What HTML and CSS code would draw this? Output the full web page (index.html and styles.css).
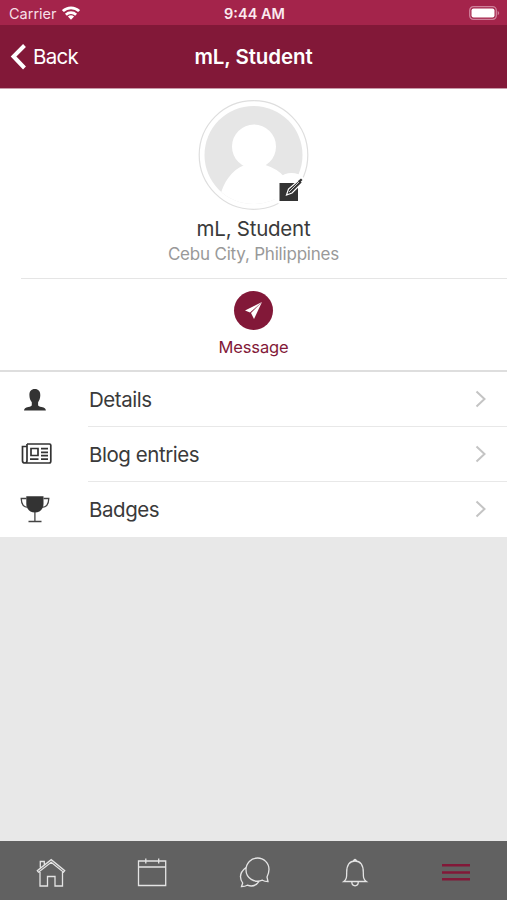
FILE: index.html
```html
<!DOCTYPE html>
<html lang="en">
<head>
<meta charset="utf-8">
<title>mL, Student</title>
<link rel="stylesheet" href="styles.css">
</head>
<body>
<div class="status">
  <div class="carrier"><span class="carrier-name">Carrier</span>
    <svg width="18" height="14" viewBox="0 0 18 14" fill="none" stroke="#fff" stroke-width="2.8"><path d="M.9 5.1a11.7 11.7 0 0 1 16.200 0M3.900 8.700a7.500 7.500 0 0 1 10.200 0"/><path d="M9 13.700 5.900 10.600a4.600 4.600 0 0 1 6.200 0z" fill="#fff" stroke="none"/></svg>
  </div>
  <div class="time">9:44 AM</div>
  <svg class="battery" width="31" height="14" viewBox="0 0 31 14"><rect x=".7" y=".7" width="26.6" height="12.6" rx="3.7" fill="none" stroke="#cf819b" stroke-width="1.3"/><rect x="2.5" y="2.5" width="23" height="9" rx="2" fill="#fff"/><path d="M28.7 4.7q3 2.3 0 4.6z" fill="#cf819b"/></svg>
</div>
<header class="navbar">
  <div class="back"><svg width="17" height="28" viewBox="0 0 17 28"><path d="M14.500 2.500 3.500 13.500l11 11.500" fill="none" stroke="#fff" stroke-width="4"/></svg><span class="back-label">Back</span></div>
  <h1 class="title">mL, Student</h1>
</header>
<main>
  <section class="profile">
    <div class="avatar">
      <svg width="112" height="112" viewBox="0 0 112 112">
        <defs><clipPath id="face"><circle cx="56" cy="56" r="49"/></clipPath></defs>
        <circle cx="56" cy="56" r="54.300" fill="#fff" stroke="#dedede" stroke-width="1.200"/>
        <g clip-path="url(#face)"><rect width="112" height="112" fill="#e6e6e6"/><circle cx="56.500" cy="47.500" r="22" fill="#fff"/><path d="M42 62h29l-3 4q12 4 18 11l26 35H0l22-13c4-16 12-28 25-33z" fill="#fff"/></g>
        <circle cx="94" cy="92" r="18" fill="#fff"/>
        <path d="M82 84h18.500v18H82z" fill="#333"/>
        <path d="m89 96 2-6L102 80.500l3 3L94.500 94z" fill="#333" stroke="#fff" stroke-width="1.200"/><path d="m91.500 93 10-10" stroke="#ccc" stroke-width="1"/><path d="m100.500 82 3-2.500 1.500 1.500-3 3z" fill="#333"/>
      </svg>
    </div>
    <h2 class="name">mL, Student</h2>
    <p class="place">Cebu City, Philippines</p>
  </section>
  <section class="contact">
    <div class="send"><svg width="19" height="19" viewBox="0 0 19 19"><path d="M18 1 1 9.500l5 2z" fill="#fff"/><path d="M18 1 7 11.900 10 18z" fill="#fff"/></svg></div>
    <span class="message">Message</span>
  </section>
  <nav class="list">
    <div class="row"><svg class="icon" width="32" height="30" viewBox="0 0 32 30"><path d="M14.800 4c3.700 0 5.500 2.300 5.500 6.200 0 3-1 5.200-2.200 7v2.800c0 1.200 1.300 1.600 3.500 2 3 .6 4.100 1.500 4.300 3.500H4c.2-2 1.300-2.900 4.300-3.500 2.200-.4 3.500-.8 3.500-2v-2.800c-1.400-1.800-2.400-4-2.400-7C9.400 6.300 11.100 4 14.800 4z" fill="#333"/></svg>
      <div class="body"><span class="label">Details</span><svg class="chevron" width="12" height="18" viewBox="0 0 12 18"><path d="m1.500 1.500 8 7.500-8 7.500"/></svg></div></div>
    <div class="row"><svg class="icon" width="32" height="30" viewBox="0 0 32 30"><g fill="none" stroke="#333" stroke-width="1.700" transform="translate(.5 -.5)"><path d="M6.500 4.500H29q1.300 0 1.300 1.300v16q0 1.700-1.700 1.700H4.500Q2 23.500 2 21.500V7h4.500v14q0 2.500-2 2.500M6.500 4.500V8"/><path d="M10.500 9h7v7h-7zM9.500 19.700H18M20.500 9.200h7M20.500 12.800h7M20.500 16.200h7M20.500 19.700h7"/></g></svg>
      <div class="body"><span class="label">Blog entries</span><svg class="chevron" width="12" height="18" viewBox="0 0 12 18"><path d="m1.500 1.500 8 7.500-8 7.500"/></svg></div></div>
    <div class="row"><svg class="icon" width="32" height="30" viewBox="0 0 32 30"><path d="M6.300 1.200h17.200v7.500c0 5.500-4 8.900-8.600 8.900s-8.600-3.400-8.600-8.900z" fill="#333"/><path d="M6.500 3.500H1.200c.2 5.500 2.200 8.800 6.800 8.800M23.500 3.500h5.300c-.2 5.500-2.200 8.800-6.800 8.800M14.900 17v9.300M8.500 26.500h13" fill="none" stroke="#444" stroke-width="1.300"/></svg>
      <div class="body"><span class="label">Badges</span><svg class="chevron" width="12" height="18" viewBox="0 0 12 18"><path d="m1.500 1.500 8 7.500-8 7.500"/></svg></div></div>
  </nav>
</main>
<footer class="tabs">
  <div class="tab"><svg width="32" height="32" viewBox="0 0 32 32"><path d="M5 15v14h7.500V19.500h7.500V29H27.500V15M3 14.700l-.7-1L16.200 2.700l13.500 11-1.200 1.500-12.300-9.900L3.500 15.200zM5.300 10.500v-6h4v3"/></svg></div>
  <div class="tab"><svg width="32" height="32" viewBox="0 0 32 32"><path d="M2.500 4h27.200v24.500H2.500zM2.500 10h27.200M9.800 1.500v5M22.700 1.500v5"/></svg></div>
  <div class="tab"><svg width="34" height="34" viewBox="0 0 34 34"><path d="M31 25.500c-2.500 0-4-.3-5.500-1.300-8 3.300-16.500-1.900-16.500-10.400C9 7.200 14 2 20.500 2S32 7.200 32 13.500c0 3-1 5.300-2 7.500zM9 11.500c-6.500 5-7 10-3.300 15.500L4.500 30.500c2.300 0 4-.2 5.800-1.300 5 1.800 9.200.3 12-4"/></svg></div>
  <div class="tab"><svg width="32" height="32" viewBox="0 0 32 32"><path d="M4.800 24.500h22.500c-3-2-3-4.500-3-9.200C24.300 8 21.500 4 16 4S7.700 8 7.700 15.300c0 4.700 0 7.200-2.900 9.200zM12.800 24.800c0 5.300 6.500 5.300 6.500 0M14.700 3.800a1.300 1.300 0 1 1 2.600 0"/></svg></div>
  <div class="tab active"><svg width="32" height="32" viewBox="0 0 32 32"><path d="M2 8.200h28M2 15.500h28M2 22.300h28"/></svg></div>
</footer>
</body>
</html>
```

FILE: styles.css
```css
* { box-sizing: border-box; }
body { margin: 0; height: 900px; display: flex; flex-direction: column; background: #e8e8e8; color: #3a3a3a; font-family: Inter, "Liberation Sans", sans-serif; }
h1, h2, p { margin: 0; font-weight: 400; }
svg { display: block; flex: none; }
.status { height: 25px; flex: none; display: grid; grid-template-columns: 1fr auto 1fr; align-items: center; padding: 2px 7px 0 9px; background: #a4244b; color: #fff; }
.carrier { display: flex; align-items: center; gap: 5px; font-size: 14.500px; color: #f6dfe6; }
.carrier svg { margin-top: -1px; }
.time { font-size: 14.500px; font-weight: 600; color: #fbeaf0; }
.battery { justify-self: end; margin-top: -1px; }
.navbar { height: 64px; flex: none; display: grid; grid-template-columns: 1fr auto 1fr; align-items: center; padding: 0 10px; background: #821838; border-bottom: 1px solid #c99aaa; color: #fff; }
.back { display: flex; align-items: center; gap: 6px; font-size: 20.500px; letter-spacing: -.7px; }
.title { font-size: 20.500px; font-weight: 600; letter-spacing: -.1px; }
.profile { height: 190px; margin-left: 21px; padding-top: 10px; border-bottom: 1px solid #e5e5e5; display: flex; flex-direction: column; align-items: center; }
.profile > * { transform: translateX(-10.500px); }
main { background: #fff; }
.name { margin-top: 5px; font-size: 20.500px; letter-spacing: -.25px; line-height: 26px; }
.place { font-size: 17px; letter-spacing: -.2px; line-height: 24px; color: #999; }
.contact { height: 93px; padding-top: 12px; border-bottom: 2px solid #dedede; display: flex; flex-direction: column; align-items: center; color: #821838; }
.send { width: 39px; height: 39px; border-radius: 50%; background: #821838; display: grid; place-items: center; }
.message { margin-top: 6px; font-size: 16.500px; letter-spacing: -.15px; line-height: 22px; }
.row { height: 55px; display: flex; align-items: center; padding-left: 20px; }
.icon { margin-right: 36px; }
.body { flex: 1; height: 55px; display: flex; justify-content: space-between; align-items: center; padding-right: 20px; border-bottom: 1px solid #e8e8e8; }
.label { font-size: 20.500px; letter-spacing: -.45px; margin-left: 1px; padding-top: 1px; }
.row:last-child .body { border-color: transparent; }
.chevron path { fill: none; stroke: #c4c4c4; stroke-width: 2; }
.tabs { margin-top: auto; height: 59px; display: flex; align-items: center; padding-top: 4px; background: #616161; }
.tab { flex: 1; display: flex; justify-content: center; }
.tab path { fill: none; stroke: #e4e4e4; stroke-width: 1.300; }
.tab.active path { stroke: #821838; stroke-width: 2.500; }
```
